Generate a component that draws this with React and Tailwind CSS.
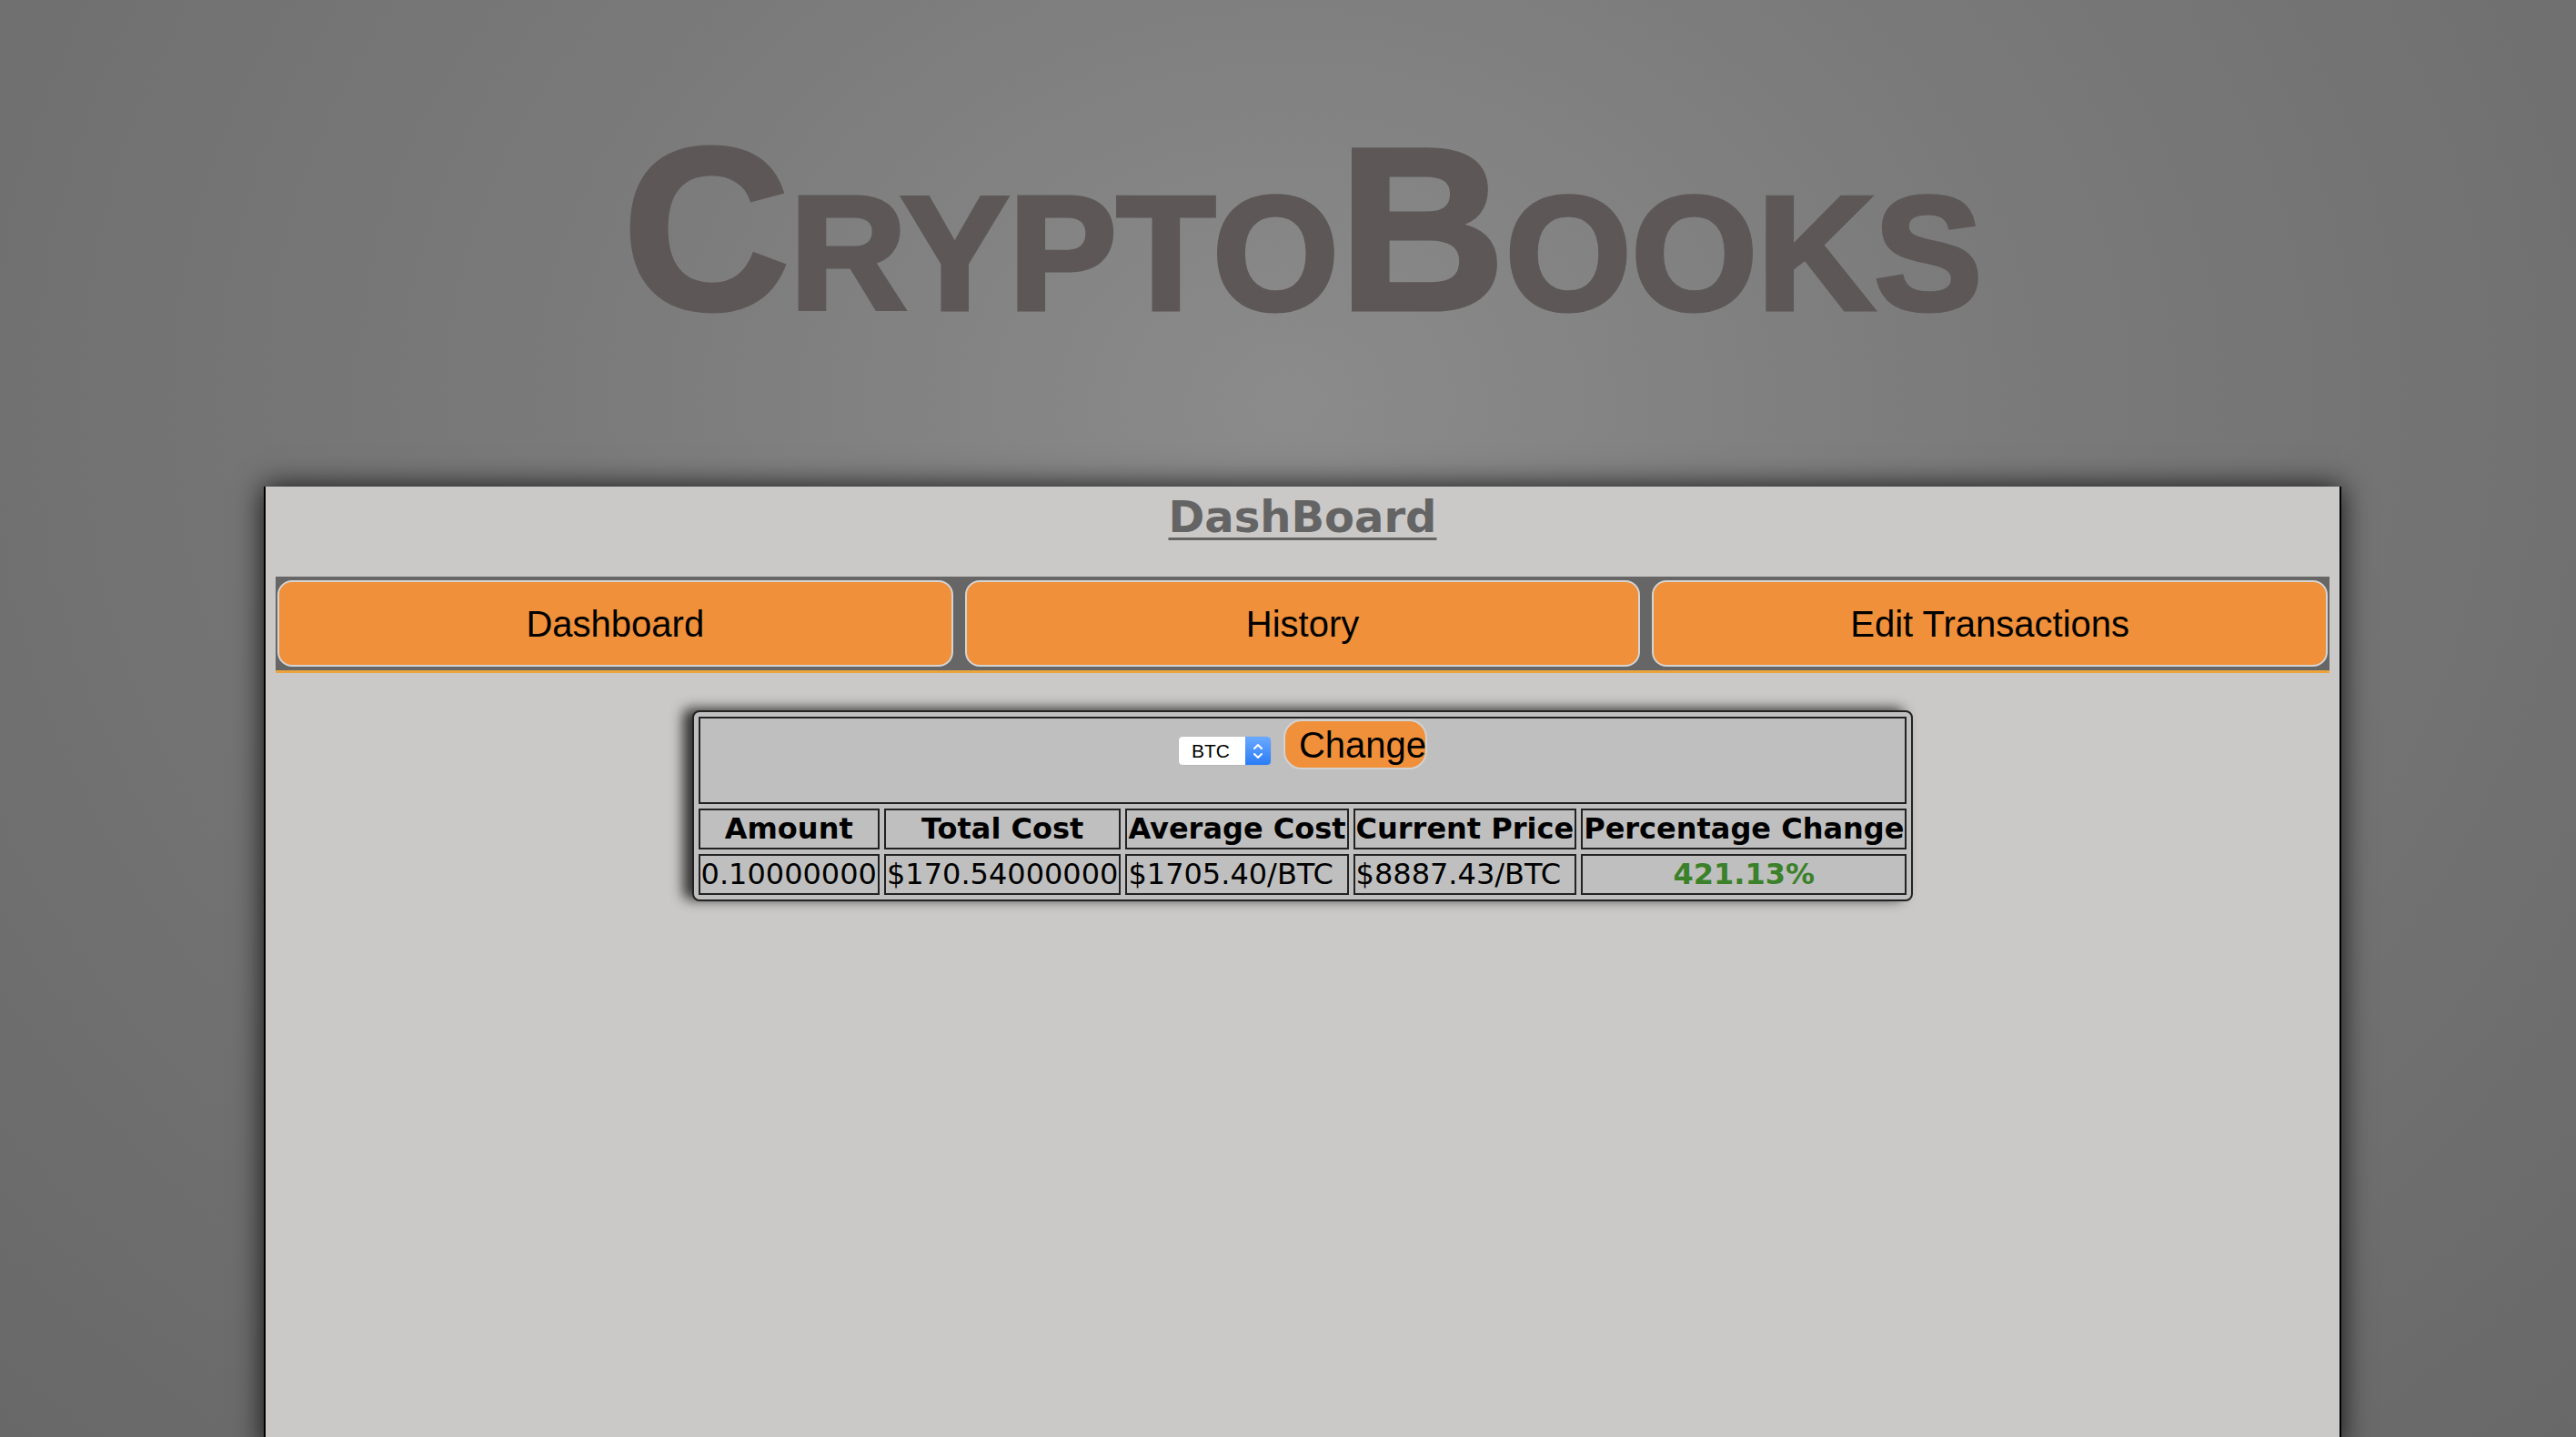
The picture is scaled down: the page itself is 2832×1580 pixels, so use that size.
import React from 'react';

const navItems = ['Dashboard', 'History', 'Edit Transactions'];

const headers = ['Amount', 'Total Cost', 'Average Cost', 'Current Price', 'Percentage Change'];

const holding = {
  amount: '0.10000000',
  totalCost: '$170.54000000',
  averageCost: '$1705.40/BTC',
  currentPrice: '$8887.43/BTC',
  change: '421.13%',
};

// mac style select, drawn by hand so it looks the same everywhere
const CoinSelect = ({ value }) => (
  <div className="mt-[18px] flex h-[33px] w-[103px] overflow-hidden rounded-[5px] border border-[#b8b8b8] bg-white">
    <div className="flex flex-1 items-center pl-[14px] font-['Liberation_Sans',Arial,sans-serif] text-[21px] leading-none text-black">
      {value}
    </div>
    <div className="flex w-[28px] items-center justify-center bg-gradient-to-b from-[#6aa9ff] to-[#2a7cf6]">
      <svg width="14" height="22" viewBox="0 0 14 22" fill="none" stroke="white" strokeWidth="2" strokeLinecap="round" strokeLinejoin="round">
        <path d="M3 8 L7 4 L11 8" />
        <path d="M3 14 L7 18 L11 14" />
      </svg>
    </div>
  </div>
);

export default function App() {
  return (
    <div className="h-[1580px] overflow-hidden bg-[radial-gradient(ellipse_at_50%_28%,#8b8b8b_0%,#7a7a7a_40%,#686868_100%)] pl-[32px]">
      {/* logo */}
      <h1 className="pt-[122px] text-center font-['Liberation_Sans',Arial,sans-serif] text-[254px] font-bold leading-[260px] text-[#5d5757] [-webkit-text-stroke:5px_#5d5757] [font-variant-caps:small-caps]">
        CryptoBooks
      </h1>

      <div className="mx-auto mt-[153px] h-[1060px] w-[2284px] border-x-2 border-black bg-[#cac9c7] px-[11px] shadow-[0_0_30px_rgba(0,0,0,0.85)]">
        <h2 className="pt-[5px] text-center font-['DejaVu_Sans',Verdana,sans-serif] text-[48px] font-bold leading-[56px] text-[#646464] underline decoration-[3px] underline-offset-[6px]">
          DashBoard
        </h2>

        {/* tabs */}
        <nav className="mt-[38px] flex gap-[13px] border-b-[3px] border-[#eba43c] bg-[#666666] px-[2px] pb-[4px] pt-[4px]">
          {navItems.map((item) => (
            <button
              key={item}
              className="flex h-[95px] flex-1 items-center justify-center rounded-[16px] border-2 border-[#d4d4d4] bg-[#f0903a] font-['Liberation_Sans',Arial,sans-serif] text-[40px] text-black"
            >
              {item}
            </button>
          ))}
        </nav>

        {/* holdings */}
        <div className="mt-[41px] flex justify-center">
          <table className="border-separate border-spacing-[5px] rounded-[8px] border-2 border-[#222] bg-[#bfbfbf] font-['DejaVu_Sans',Verdana,sans-serif] text-[32px] text-black shadow-[-10px_-2px_14px_rgba(0,0,0,0.75)]">
            <tbody>
              <tr>
                <td colSpan={5} className="h-[96px] border-2 border-[#222] p-0 align-top">
                  <div className="flex items-start justify-center gap-[13px] pt-[1px]">
                    <CoinSelect value="BTC" />
                    <button className="flex h-[55px] w-[158px] items-center rounded-[20px] border-2 border-[#d2d2d2] bg-[#f0903a] pl-[15px] font-['Liberation_Sans',Arial,sans-serif] text-[40px] leading-none text-black">
                      Change
                    </button>
                  </div>
                </td>
              </tr>
              <tr>
                {headers.map((h) => (
                  <th key={h} className="border-2 border-[#222] px-[1px] py-[2px] text-center font-bold leading-[37px]">
                    {h}
                  </th>
                ))}
              </tr>
              <tr>
                <td className="border-2 border-[#222] px-[1px] py-[2px] text-left leading-[37px]">{holding.amount}</td>
                <td className="border-2 border-[#222] px-[1px] py-[2px] text-left leading-[37px]">{holding.totalCost}</td>
                <td className="border-2 border-[#222] px-[1px] py-[2px] text-left leading-[37px]">{holding.averageCost}</td>
                <td className="border-2 border-[#222] px-[1px] py-[2px] text-left leading-[37px]">{holding.currentPrice}</td>
                <td className="border-2 border-[#222] px-[1px] py-[2px] text-center font-bold leading-[37px] text-[#3b8129]">
                  {holding.change}
                </td>
              </tr>
            </tbody>
          </table>
        </div>
      </div>
    </div>
  );
}
